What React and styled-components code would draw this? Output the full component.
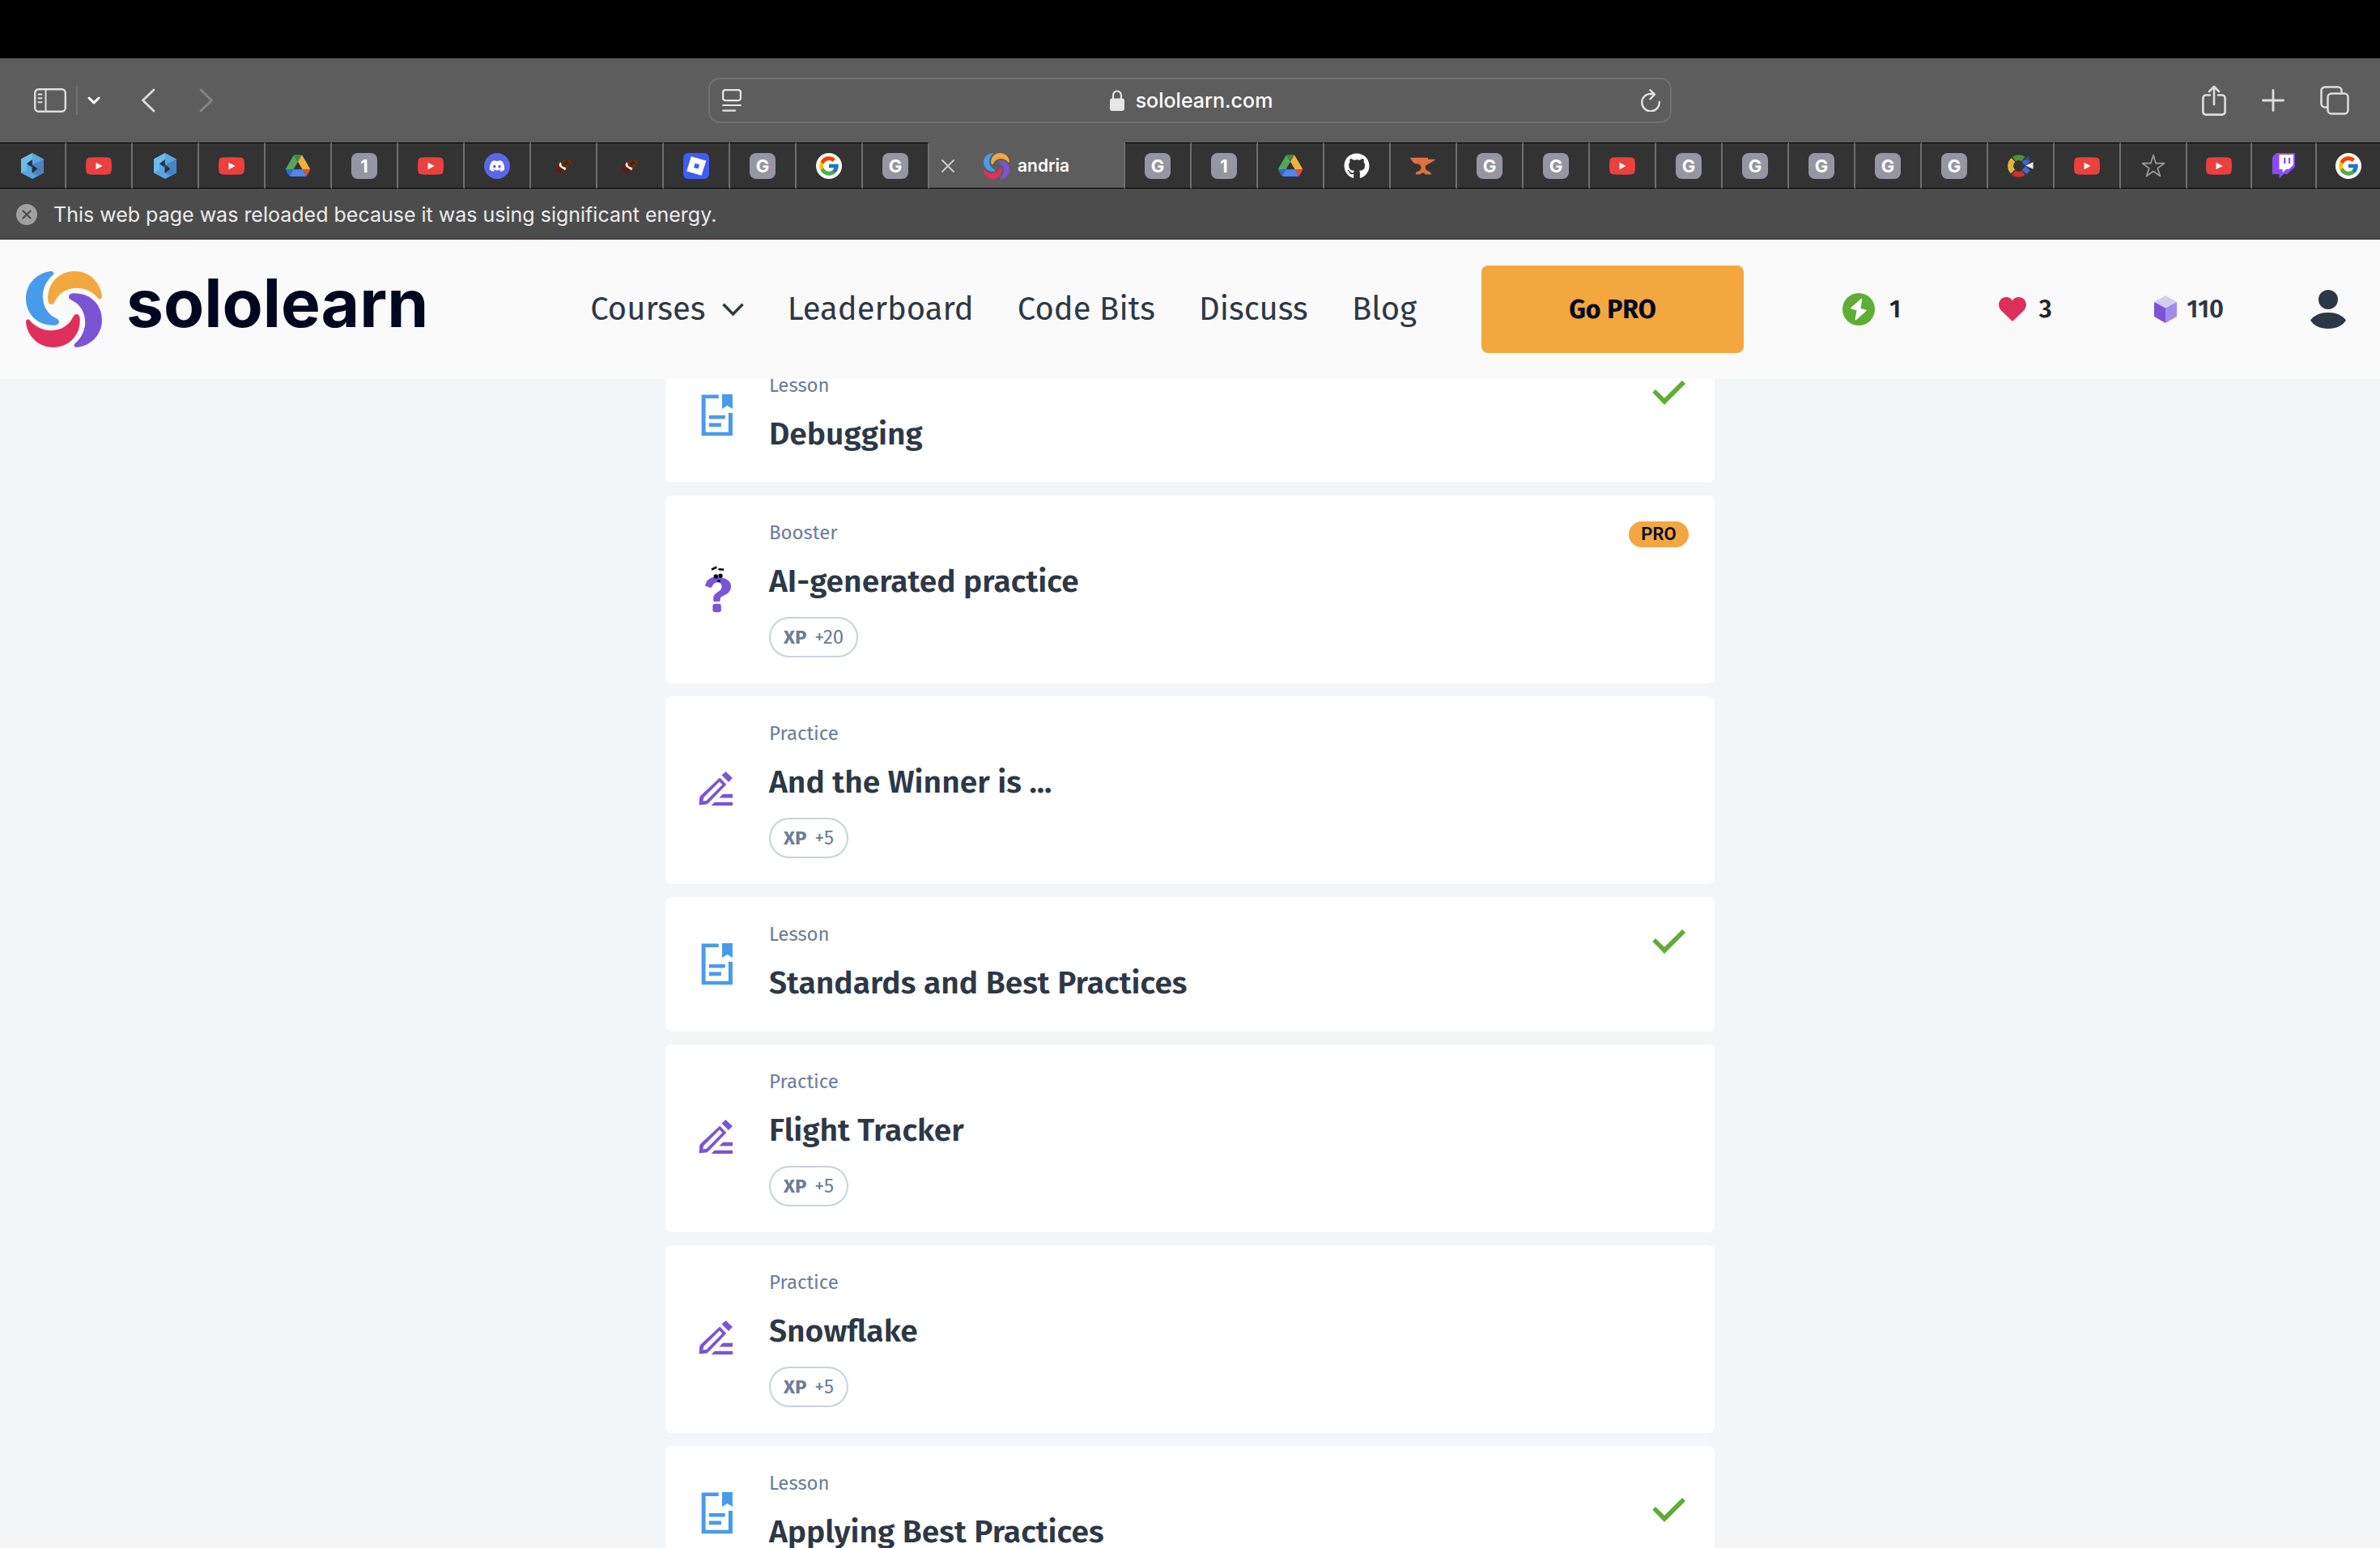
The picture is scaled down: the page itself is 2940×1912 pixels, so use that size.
import React from "react";
import styled, { createGlobalStyle } from "styled-components";
import { FaDiscord, FaGithub } from "react-icons/fa";
import { FcGoogle } from "react-icons/fc";

const pageFont = `"Fira Sans", "Noto Sans", "Open Sans", sans-serif`;
const systemFont = `Inter, "Liberation Sans", sans-serif`;

const GlobalStyle = createGlobalStyle`
  * { box-sizing: border-box; }
  body { margin: 0; background: #f3f5f7; }
  button { border: 0; padding: 0; background: none; font: inherit; color: inherit; }
  h1, h2, p, ul { margin: 0; padding: 0; }
  ul { list-style: none; }
  svg { display: block; flex: none; }
`;

/* ---------- Browser window ---------- */

const Window = styled.div`
  display: flex;
  flex-direction: column;
  height: 100vh;
  overflow: hidden;
  font-family: ${systemFont};
`;

const MenuBar = styled.div`
  flex: none;
  height: 72px;
  background: #000;
`;

const Toolbar = styled.div`
  flex: none;
  display: grid;
  grid-template-columns: 1fr minmax(0, 1190px) 1fr;
  align-items: center;
  height: 104px;
  background: #5d5d5d;
  color: #dedede;
`;

const ToolGroup = styled.div`
  display: flex;
  align-items: center;
  justify-content: ${(p) => (p.$end ? "flex-end" : "flex-start")};
  gap: ${(p) => p.$gap}px;
  padding: ${(p) => (p.$end ? "0 38px 0 0" : p.$inset ? "0 0 0 42px" : "0")};
`;

const IconButton = styled.button`
  display: flex;
  color: ${(p) => p.$color || "inherit"};
`;

const ToolDivider = styled.span`
  width: 2px;
  height: 36px;
  background: #707070;
`;

const AddressBar = styled.div`
  display: grid;
  grid-template-columns: 24px 1fr 24px;
  align-items: center;
  height: 56px;
  padding: 0 12px 0 15px;
  border: 2px solid #717171;
  border-radius: 14px;
  color: #e6e6e6;
`;

const Address = styled.label`
  display: flex;
  align-items: center;
  justify-content: center;
  gap: 14px;
`;

const AddressInput = styled.input`
  field-sizing: content;
  padding: 0;
  border: 0;
  outline: 0;
  background: none;
  color: #fff;
  font: 500 25px/32px ${systemFont};
`;

const TabStrip = styled.div`
  flex: none;
  display: flex;
  height: 57px;
  background: #333;
`;

const Tab = styled.button`
  flex: ${(p) => (p.$fluid ? "1 1 0" : "0 0 82px")};
  display: flex;
  align-items: center;
  justify-content: center;
  height: 57px;
  border-top: 1px solid #000;
  border-bottom: 1px solid #000;
  border-right: 2px solid #6f6f6f;
  &:last-child { border-right: 0; }
`;

const ActiveTab = styled.div`
  flex: 0 0 242px;
  display: flex;
  align-items: center;
  height: 57px;
  padding: 2px 0 0 15px;
  border-bottom: 1px solid #000;
  border-right: 2px solid #6f6f6f;
  background: #5d5d5d;
  color: #fff;
`;

const TabTitle = styled.button`
  display: flex;
  align-items: center;
  gap: 10px;
  margin-left: 36px;
  font-size: 21px;
  line-height: 32px;
  font-weight: 600;
`;

const LetterTile = styled.span`
  display: flex;
  align-items: center;
  justify-content: center;
  width: 32px;
  height: 32px;
  border-radius: 8px;
  background: #9696a2;
  color: #fff;
  font-size: 22px;
  line-height: 32px;
  font-weight: 700;
`;

const RoundTile = styled.span`
  display: flex;
  align-items: center;
  justify-content: center;
  width: 32px;
  height: 32px;
  border-radius: 50%;
  background: ${(p) => p.$fill};
  color: #fff;
`;

const Notice = styled.div`
  flex: none;
  display: flex;
  align-items: center;
  gap: 20px;
  height: 63px;
  padding: 2px 20px 0;
  border-bottom: 2px solid #454143;
  background: #4c4c4c;
  color: #ececec;
  font-size: 25px;
  line-height: 32px;
`;

/* ---------- Site header ---------- */

const SiteHeader = styled.header`
  position: relative;
  z-index: 1;
  flex: none;
  display: flex;
  align-items: center;
  height: 172px;
  padding: 0 42px 0 32px;
  background: #fafafa;
  color: #2d3846;
  font-family: ${pageFont};
`;

const Brand = styled.a`
  display: flex;
  align-items: center;
  gap: 30px;
  color: #00081f;
  text-decoration: none;
`;

const Wordmark = styled.span`
  padding-bottom: 14px;
  font-family: ${systemFont};
  font-size: 82px;
  line-height: 96px;
  font-weight: 700;
`;

const Nav = styled.nav`
  flex: 1;
  display: flex;
  align-items: center;
  justify-content: space-between;
  margin: 0 80px 0 200px;
  font-size: 40px;
  line-height: 48px;
`;

const NavLink = styled.a`
  color: inherit;
  text-decoration: none;
  white-space: nowrap;
`;

const NavMenu = styled.button`
  display: flex;
  align-items: center;
  gap: 20px;
`;

const ProButton = styled.button`
  width: 324px;
  height: 108px;
  margin-right: 122px;
  border-radius: 8px;
  background: #f2a73f;
  color: #00081f;
  font-size: 32px;
  line-height: 40px;
  font-weight: 700;
`;

const Stat = styled.button`
  display: flex;
  align-items: center;
  gap: ${(p) => p.$gap}px;
  width: 194px;
  color: ${(p) => p.$color || "#24262b"};
  font-size: 31px;
  line-height: 40px;
  font-weight: 600;
`;

const Profile = styled.a`
  margin-left: auto;
  color: #2d3846;
`;

const Stats = styled.div`
  display: flex;
  align-items: center;
  width: 622px;
`;

/* ---------- Lesson list ---------- */

const Main = styled.main`
  flex: 1;
  min-height: 0;
  overflow: hidden;
  padding: 0 32px;
  background: #f3f5f7;
  font-family: ${pageFont};
`;

const List = styled.ul`
  display: flex;
  flex-direction: column;
  gap: 16px;
  max-width: 1296px;
  margin: -38px auto 0;
`;

const Card = styled.li`
  display: flex;
  align-items: center;
  gap: 40px;
  padding: 32px 32px 32px 40px;
  border-radius: 8px;
  background: #fff;
`;

const CardBody = styled.div`
  flex: 1;
`;

const Kind = styled.p`
  margin-bottom: 18px;
  color: #6b7d99;
  font-size: 24px;
  line-height: 28px;
`;

const Title = styled.h2`
  color: #2d3846;
  font-size: 39px;
  line-height: 56px;
  font-weight: 600;
`;

const XpPill = styled.span`
  display: inline-flex;
  align-items: center;
  gap: 10px;
  height: 50px;
  margin-top: 16px;
  padding: 0 16px;
  border: 2px solid #c8d2db;
  border-radius: 25px;
  color: #6b7d99;
  font-size: 24px;
  line-height: 32px;
  vertical-align: top;
`;

const Status = styled.div`
  align-self: flex-start;
  padding-top: ${(p) => (p.$lowered ? 24 : 0)}px;
`;

const ProBadge = styled.span`
  display: block;
  width: 74px;
  border-radius: 16px;
  background: #f2a73f;
  color: #00081f;
  font: 600 22px/32px Roboto, sans-serif;
  text-align: center;
`;

/* ---------- Drawings ---------- */

const stroke = { fill: "none", stroke: "currentColor", strokeLinecap: "round", strokeLinejoin: "round" };

const SidebarIcon = () => (
  <svg width="40" height="30" viewBox="0 0 40 30" {...stroke} strokeWidth="2.4">
    <rect x="1.2" y="1.2" width="37.6" height="27.6" rx="4.5" />
    <path d="M14.5 1.5v27M5.5 7.5h4M5.5 12.3h4M5.5 17.2h4" strokeWidth="2" />
  </svg>
);
const SmallChevron = () => (
  <svg width="16" height="10" viewBox="0 0 16 10" {...stroke} strokeWidth="3"><path d="M2 2l6 6 6-6" /></svg>
);
const BackIcon = () => (
  <svg width="18" height="30" viewBox="0 0 18 30" {...stroke} strokeWidth="2.8"><path d="M16 2L2.500 15 16 28" /></svg>
);
const ForwardIcon = () => (
  <svg width="18" height="30" viewBox="0 0 18 30" {...stroke} strokeWidth="2.8"><path d="M2 2l13.500 13L2 28" /></svg>
);
const ReaderIcon = () => (
  <svg width="24" height="28" viewBox="0 0 24 28" {...stroke} strokeWidth="2.2">
    <rect x="1.100" y="1.100" width="21.800" height="13" rx="3" />
    <path d="M1.200 20h21.600M1.200 26.600h15" />
  </svg>
);
const LockIcon = () => (
  <svg width="18" height="26" viewBox="0 0 18 26">
    <path d="M4 12V7a5 5.500 0 0 1 10 0v5" fill="none" stroke="currentColor" strokeWidth="2.200" />
    <rect x="0" y="10.500" width="18" height="15.500" rx="3" fill="currentColor" />
  </svg>
);
const ReloadIcon = () => (
  <svg width="24" height="28" viewBox="0 0 24 28" {...stroke} strokeWidth="2.300">
    <path d="M22.800 16A10.800 10.800 0 1 1 12 5.800L16.500 6.500M11.500 1.200L17 6.600l-5.500 5.600" />
  </svg>
);
const ShareIcon = () => (
  <svg width="30" height="38" viewBox="0 0 30 38" {...stroke} strokeWidth="2.600">
    <path d="M10 12.500H5a3.600 3.600 0 0 0-3.600 3.600V33A3.600 3.600 0 0 0 5 36.600h20a3.600 3.600 0 0 0 3.600-3.600V16.100a3.600 3.600 0 0 0-3.600-3.600h-5M15 24V2M9 8l6-6 6 6" />
  </svg>
);
const PlusIcon = () => (
  <svg width="28" height="28" viewBox="0 0 28 28" {...stroke} strokeWidth="2.800"><path d="M14 1.500v25M1.500 14h25" /></svg>
);
const OverviewIcon = () => (
  <svg width="36" height="36" viewBox="0 0 36 36" {...stroke} strokeWidth="2.500">
    <rect x="9.500" y="9.500" width="25" height="25" rx="4.500" />
    <path d="M9 26.500H6A4.500 4.500 0 0 1 1.500 22V6A4.500 4.500 0 0 1 6 1.500h16A4.500 4.500 0 0 1 26.500 6v3" />
  </svg>
);
const CloseIcon = () => (
  <svg width="16" height="16" viewBox="0 0 16 16" {...stroke} stroke="#cfcfcf" strokeWidth="1.800"><path d="M1 1l14 14M15 1L1 15" /></svg>
);
const DismissIcon = () => (
  <svg width="26" height="26" viewBox="0 0 26 26">
    <circle cx="13" cy="13" r="13" fill="#a0a0a0" />
    <path d="M8.500 8.500l9 9M17.500 8.500l-9 9" stroke="#4c4c4c" strokeWidth="2.200" strokeLinecap="round" />
  </svg>
);

const HexIcon = () => (
  <svg width="32" height="32" viewBox="0 0 32 32">
    <path d="M16 0l14 7.500v17L16 32 2 24.500v-17z" fill="#5aa6de" />
    <path d="M16 0L2 7.500v17l7-4V13.300l6.800-5.300z" fill="#6bbcea" />
    <path d="M30 7.500v17L23 28l-7.500-3 7-5.500L16 14l8-3z" fill="#4a83c4" />
    <path d="M15.800 8v10L9 13.300zM15.500 14v11l7-5.500z" fill="#2a3038" />
  </svg>
);
const VideoIcon = () => (
  <svg width="32" height="22" viewBox="0 0 32 22">
    <path d="M5 .6C12 0 20 0 27 .6c3 .2 4.400 1.400 4.600 4.400.5 4 .5 8 0 12-.2 3-1.600 4.200-4.600 4.400-7 .6-15 .6-22 0-3-.2-4.400-1.400-4.600-4.400-.5-4-.5-8 0-12C.6 2 2 .8 5 .6z" fill="#eb4040" />
    <path d="M12.500 6.800v8.400L20.500 11z" fill="#fff" />
  </svg>
);
const DriveIcon = () => (
  <svg width="30" height="27" viewBox="0 0 87.300 78">
    <path d="M6.600 66.850l3.850 6.650c.8 1.400 1.950 2.500 3.300 3.300L27.500 53H0c0 1.550.4 3.100 1.200 4.500z" fill="#3367d6" />
    <path d="M43.650 25L29.900 1.200c-1.350.8-2.500 1.900-3.300 3.300l-25.400 44A9.060 9.060 0 0 0 0 53h27.500z" fill="#56a55a" />
    <path d="M73.550 76.800c1.350-.8 2.500-1.900 3.300-3.300l1.600-2.750L86.100 57.500c.8-1.400 1.200-2.950 1.200-4.500H59.800l5.850 11.500z" fill="#d8503f" />
    <path d="M43.650 25L57.400 1.200C56.050.4 54.500 0 52.900 0H34.400c-1.600 0-3.150.45-4.500 1.200z" fill="#3d8a45" />
    <path d="M59.800 53H27.500L13.750 76.800c1.350.8 2.900 1.200 4.500 1.200h50.800c1.600 0 3.150-.45 4.500-1.200z" fill="#5084ee" />
    <path d="M73.400 26.500l-12.700-22c-.8-1.400-1.950-2.500-3.300-3.300L43.650 25 59.800 53h27.450c0-1.550-.4-3.100-1.200-4.500z" fill="#f0b03c" />
  </svg>
);
const ChocolateIcon = () => (
  <svg width="20" height="18" viewBox="0 0 20 18">
    <path d="M9 2.500l3.500-2L15 2l2.500-1.500L20 3.500 19.500 6l-5 6L7 5.500z" fill="#63300f" />
    <path d="M12.500 1.500l5 6M9 5.500l6 .5M15 2.500L11.500 9" stroke="#351a08" strokeWidth="1" />
    <path d="M5.500 5L7 4.500 8 9l5.500 2.500L12 14.500 4 9z" fill="#efe6e6" />
    <path d="M2.500 8L4 7l2 4.500 5.500 2.500-3 4L5 16.500 0 15z" fill="#6b1612" />
  </svg>
);
const BloxIcon = () => (
  <svg width="32" height="32" viewBox="0 0 32 32">
    <rect width="32" height="32" rx="6" fill="#3f5cf5" />
    <path d="M9.800 4.200l18.500 5.400-5.800 18.200L4.200 22.500z" fill="#fff" />
    <path d="M14.600 12.700l5.400 1.500-1.500 5.300-5.500-1.500z" fill="#3f5cf5" />
  </svg>
);
const AnvilIcon = () => (
  <svg width="32" height="32" viewBox="0 0 32 32" fill="#e07044">
    <path d="M0 5.700h22v2h10l-8 5c-2 1.300-4 1.600-5 3.300-.8 1.600-.2 3.400 1 5 1.500 1.500 4 1.800 5 3l1.500 2.500h-8l-1-2c-2-.3-4 .2-5.500 2H6.500l1-3c4-1 6.300-3 6-6-.4-3.400-3.500-4.300-8-4.500L2 9.500z" />
  </svg>
);
const RingIcon = () => (
  <svg width="34" height="28" viewBox="0 0 34 28" fill="none" strokeWidth="7">
    <path d="M9 5.500A10 10 0 0 1 20.500 5.500" stroke="#47982f" />
    <path d="M8 6.500A10 10 0 0 0 7.500 21" stroke="#e5b43f" />
    <path d="M8.500 22A10 10 0 0 0 20.500 22.500" stroke="#c9352c" />
    <path d="M21.500 6.500L26 11M21.500 21.500L26 17" stroke="#3e68dd" strokeWidth="8" />
    <path d="M20.500 7l7-5.500v6z" fill="#2c4a9e" />
    <path d="M22 13.500l11-5v10z" fill="#efefef" stroke="#333" strokeWidth="1" />
  </svg>
);
const StarIcon = () => (
  <svg width="32" height="32" viewBox="0 0 32 32" fill="none" stroke="#9b9b9b" strokeWidth="1.700" strokeLinejoin="round">
    <path d="M16 2.500l3.200 10.200H29.500l-8.300 6.200L24.500 28.500 16 22.500 7.500 28.500l3.300-9.600L2.500 12.700h10.300z" />
  </svg>
);
const StreamIcon = () => (
  <svg width="28" height="32" viewBox="0 0 28 32">
    <path d="M5 0h23v17l-9.500 9H14l-5.500 5.500V26H0V5z" fill="#8b4bf6" />
    <path d="M8.500 2H26v12.500L20.500 20H17l-4.300 4.300V20H8.500z" fill="#fff" />
    <path d="M14.200 5.700h2.200V13h-2.200zM20 5.700h2.200V13H20z" fill="#8b4bf6" />
  </svg>
);

const petal = "M27.300 36C26 14 42 0 60 0c18 0 32 13 34 31 0 4-4 4.500-5.500 1.500C82 25 72 20.800 63 20.800c-13 0-23 7.200-27.500 17.200-2 4.500-7.500 4-8.200-2z";
const SwirlLogo = ({ size }) => (
  <svg width={size} height={size} viewBox="0 0 94 94">
    {["#f2a73f", "#7b54d6", "#df2f5c", "#489bea"].map((fill, i) => (
      <path key={fill} d={petal} fill={fill} transform={`rotate(${i * 90} 47 47)`} />
    ))}
  </svg>
);
const NavChevron = () => (
  <svg width="27" height="17" viewBox="0 0 27 17" fill="none" stroke="currentColor" strokeWidth="3.400"><path d="M1.500 1.800l12 12.200 12-12.200" /></svg>
);
const BoltIcon = () => (
  <svg width="40" height="40" viewBox="0 0 40 40">
    <circle cx="20" cy="20" r="20" fill="#5fad33" />
    <path d="M23.500 7.500L11 18.700l7.500 2-2.200 12L29 21.500l-7.500-2z" fill="#fff" stroke="#fff" strokeWidth="1.600" strokeLinejoin="round" />
  </svg>
);
const HeartIcon = () => (
  <svg width="34" height="30" viewBox="0 0 34 30"><path d="M17 30L3 16.500C-3 10 1 0 9 0c4 0 7 2 8 4.800C18 2 21 0 25 0c8 0 12 10 6 16.500z" fill="#df2f5c" /></svg>
);
const GemIcon = () => (
  <svg width="28" height="34" viewBox="0 0 28 34">
    <path d="M14 0l14 8-14 7.500L0 8z" fill="#d3cdf2" />
    <path d="M0 8l14 7.500V34L0 26z" fill="#7b54d6" />
    <path d="M28 8l-14 7.500V34l14-8z" fill="#a58aec" />
  </svg>
);
const PersonIcon = () => (
  <svg width="44" height="48" viewBox="0 0 44 48" fill="currentColor">
    <circle cx="22" cy="12" r="12" />
    <path d="M0 37.500C5 31 13 28 22 28s17 3 22 9.500C40 44 32 48 22 48S4 44 0 37.500z" />
  </svg>
);

const LessonIcon = () => (
  <svg width="48" height="52" viewBox="0 0 48 52" fill="#489bea">
    <path d="M4.600.4h21.100V5H9.600v41.700h28.300V23h5v28.300H4.600zM30 0h12.900v18l-6.400-4-6.500 4zM13.800 26h19.900v4.600H13.800zM13.800 35.600h15.100v4.600H13.800z" />
  </svg>
);
const PracticeIcon = () => (
  <svg width="48" height="48" viewBox="0 0 48 48" fill="#7b54d6">
    <path d="M34.500.9l8.400 8L38 14l-8.500-8.500z" />
    <path fillRule="evenodd" d="M27.200 8.500l8.100 8.500-22.500 23.300-2 1.200-9.200.7.600-9 1.200-2.500zM26.800 13.500L7.300 33l-.9 4.600 4.500-.8L30.300 17z" />
    <path d="M31 28.800h12v4.600H26.300zM20.700 38.700H43V43H16.500z" />
  </svg>
);
const BoosterIcon = () => (
  <svg width="48" height="58" viewBox="0 0 48 58">
    <path d="M9.200 23.500L11 19c4-5 9-6 14-5.200C35 14.500 41 19 41 25c0 7-5 10-10 12-3 1.500-3.400 3-3.400 5 0 2-.6 2-2.100 2H21c-1.500 0-2-.5-1.800-2-.2-6 1.800-7.500 5.800-10 4-2.500 4.500-4.500 4.500-7s-2-4.500-5-4.500c-3.500 0-5.500 1.500-7 5.500-.5 1-1.500 1-2.500.7L10 25c-1-.4-1-1-.8-1.500z" fill="#7b54d6" />
    <rect x="18.400" y="46.700" width="10.400" height="10.600" rx="3" fill="#7b54d6" />
    <g fill="#0a0a28"><circle cx="22.300" cy="13" r="2.700" /><circle cx="28" cy="12.200" r="2.700" /><ellipse cx="26" cy="18.500" rx="2" ry="1.400" /></g>
    <path d="M17 4.500l6.300-3M25.500 4l6.500.6" stroke="#0a0a28" strokeWidth="2.600" />
  </svg>
);
const CheckIcon = () => (
  <svg width="48" height="48" viewBox="0 0 48 48" role="img" aria-label="Completed">
    <path d="M3.300 22.700L7 19l11 10.700L40 8l4 4-26 26z" fill="#5fad33" />
  </svg>
);

/* ---------- Data ---------- */

const favicons = {
  hex: <HexIcon />,
  video: <VideoIcon />,
  drive: <DriveIcon />,
  one: <LetterTile>1</LetterTile>,
  g: <LetterTile>G</LetterTile>,
  discord: <RoundTile $fill="#5b66ea"><FaDiscord size={20} /></RoundTile>,
  choc: <ChocolateIcon />,
  blox: <BloxIcon />,
  google: <RoundTile $fill="#fff"><FcGoogle size={28} /></RoundTile>,
  github: <FaGithub size={32} color="#fff" />,
  anvil: <AnvilIcon />,
  ring: <RingIcon />,
  star: <StarIcon />,
  stream: <StreamIcon />,
};

const tabsBefore = ["hex", "video", "hex", "video", "drive", "one", "video", "discord", "choc", "choc", "blox", "g", "google", "g"];
const tabsAfter = ["g", "one", "drive", "github", "anvil", "g", "g", "video", "g", "g", "g", "g", "g", "ring", "video", "star", "video", "stream", "google"];

const items = [
  { kind: "Lesson", title: "Debugging", done: true },
  { kind: "Booster", title: "AI-generated practice", xp: 20, pro: true },
  { kind: "Practice", title: "And the Winner is ...", xp: 5 },
  { kind: "Lesson", title: "Standards and Best Practices", done: true },
  { kind: "Practice", title: "Flight Tracker", xp: 5 },
  { kind: "Practice", title: "Snowflake", xp: 5 },
  { kind: "Lesson", title: "Applying Best Practices", done: true, latest: true },
];

const kindIcons = { Lesson: LessonIcon, Practice: PracticeIcon, Booster: BoosterIcon };

function LessonCard({ kind, title, xp, done, pro, latest }) {
  const Icon = kindIcons[kind];
  return (
    <Card>
      <Icon />
      <CardBody>
        <Kind>{kind}</Kind>
        <Title>{title}</Title>
        {xp && <XpPill><b>XP</b><span>+{xp}</span></XpPill>}
      </CardBody>
      <Status $lowered={latest}>
        {done && <CheckIcon />}
        {pro && <ProBadge>PRO</ProBadge>}
      </Status>
    </Card>
  );
}

export default function App() {
  return (
    <Window>
      <GlobalStyle />
      <MenuBar />
      <Toolbar>
        <ToolGroup $gap={50} $inset>
          <ToolGroup $gap={12}>
            <IconButton aria-label="Sidebar"><SidebarIcon /></IconButton>
            <ToolDivider />
            <IconButton aria-label="Tab groups" $color="#fff"><SmallChevron /></IconButton>
          </ToolGroup>
          <ToolGroup $gap={54}>
            <IconButton aria-label="Back"><BackIcon /></IconButton>
            <IconButton aria-label="Forward" $color="#868686"><ForwardIcon /></IconButton>
          </ToolGroup>
        </ToolGroup>
        <AddressBar>
          <IconButton aria-label="Reader"><ReaderIcon /></IconButton>
          <Address>
            <LockIcon />
            <AddressInput aria-label="Address" defaultValue="sololearn.com" />
          </Address>
          <IconButton aria-label="Reload"><ReloadIcon /></IconButton>
        </AddressBar>
        <ToolGroup $gap={44} $end>
          <IconButton aria-label="Share"><ShareIcon /></IconButton>
          <IconButton aria-label="New tab"><PlusIcon /></IconButton>
          <IconButton aria-label="Tab overview"><OverviewIcon /></IconButton>
        </ToolGroup>
      </Toolbar>
      <TabStrip>
        {tabsBefore.map((name, i) => <Tab key={i}>{favicons[name]}</Tab>)}
        <ActiveTab>
          <IconButton aria-label="Close tab"><CloseIcon /></IconButton>
          <TabTitle><SwirlLogo size={32} />andria</TabTitle>
        </ActiveTab>
        {tabsAfter.map((name, i) => <Tab key={i} $fluid={i > 15}>{favicons[name]}</Tab>)}
      </TabStrip>
      <Notice>
        <IconButton aria-label="Dismiss"><DismissIcon /></IconButton>
        <p>This web page was reloaded because it was using significant energy.</p>
      </Notice>
      <SiteHeader>
        <Brand href="#home"><SwirlLogo size={94} /><Wordmark>sololearn</Wordmark></Brand>
        <Nav>
          <NavMenu>Courses<NavChevron /></NavMenu>
          <NavLink href="#leaderboard">Leaderboard</NavLink>
          <NavLink href="#code-bits">Code Bits</NavLink>
          <NavLink href="#discuss">Discuss</NavLink>
          <NavLink href="#blog">Blog</NavLink>
        </Nav>
        <ProButton>Go PRO</ProButton>
        <Stats>
          <Stat $gap={18}><BoltIcon />1</Stat>
          <Stat $gap={16}><HeartIcon />3</Stat>
          <Stat $gap={12} $color="#2d3846"><GemIcon />110</Stat>
          <Profile href="#profile" aria-label="Profile"><PersonIcon /></Profile>
        </Stats>
      </SiteHeader>
      <Main>
        <List>
          {items.map((item) => <LessonCard key={item.title} {...item} />)}
        </List>
      </Main>
    </Window>
  );
}
